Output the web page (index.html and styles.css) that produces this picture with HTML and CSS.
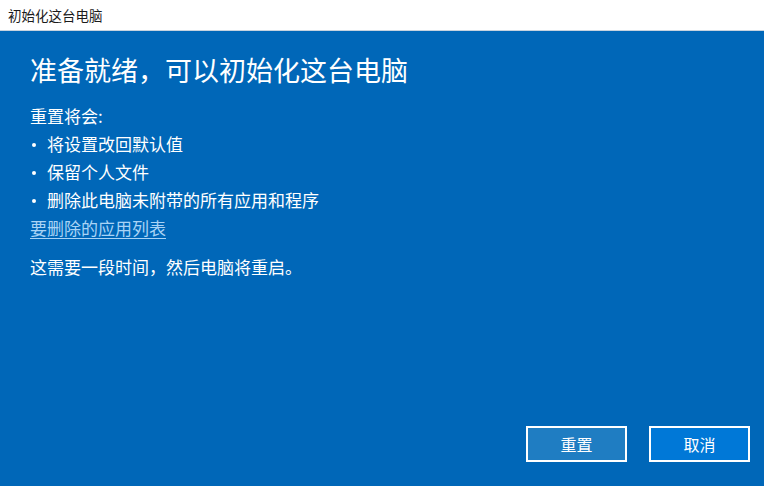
FILE: index.html
```html
<!DOCTYPE html>
<html lang="zh-CN">
<head>
<meta charset="utf-8">
<title>初始化这台电脑</title>
<link rel="stylesheet" href="styles.css">
</head>
<body>
<div class="window">
  <div class="titlebar">初始化这台电脑</div>
  <div class="main">
    <h1 class="heading">准备就绪，可以初始化这台电脑</h1>
    <div class="line">重置将会:</div>
    <ul class="list">
      <li>将设置改回默认值</li>
      <li>保留个人文件</li>
      <li>删除此电脑未附带的所有应用和程序</li>
    </ul>
    <div class="line"><a class="link" href="#">要删除的应用列表</a></div>
    <div class="line note">这需要一段时间，然后电脑将重启。</div>
    <div class="actions">
      <button class="btn btn-reset">重置</button>
      <button class="btn btn-cancel">取消</button>
    </div>
  </div>
</div>
</body>
</html>
```
FILE: styles.css
```css
html, body {
  margin: 0;
  padding: 0;
}
body {
  width: 764px;
  height: 486px;
  overflow: hidden;
  font-family: "Noto Sans CJK SC", "Noto Sans", sans-serif;
}
.window {
  display: flex;
  flex-direction: column;
  height: 100%;
}
.titlebar {
  height: 30px;
  line-height: 30px;
  padding-left: 8px;
  background: #ffffff;
  color: #1b1b1b;
  font-size: 13.5px;
  border-bottom: 1px solid #c7d3df;
}
.main {
  flex: 1;
  display: flex;
  flex-direction: column;
  background: #0067b8;
  color: #ffffff;
  padding: 21px 14px 24px 30px;
}
.heading {
  margin: 0 0 14px;
  font-size: 27px;
  font-weight: 400;
  line-height: 36px;
}
.line {
  font-size: 17px;
  line-height: 28px;
}
.list {
  list-style: none;
  margin: 0;
  padding: 0;
  font-size: 17px;
  line-height: 28px;
}
.list li {
  display: flex;
  align-items: center;
}
.list li::before {
  content: "";
  flex: none;
  width: 4px;
  height: 4px;
  border-radius: 50%;
  background: #ffffff;
  margin: 1px 11px 0 2px;
}
.link {
  color: #a9d3f5;
  text-decoration: underline;
  text-underline-offset: 3px;
}
.note {
  margin-top: 11px;
}
.actions {
  margin-top: auto;
  display: flex;
  justify-content: flex-end;
  gap: 22px;
}
.btn {
  width: 101px;
  height: 36px;
  border: 2px solid #ffffff;
  color: #ffffff;
  font-family: inherit;
  font-size: 16px;
  padding: 0;
}
.btn-reset {
  background: #1f7dc2;
}
.btn-cancel {
  background: #0078d7;
}
```
